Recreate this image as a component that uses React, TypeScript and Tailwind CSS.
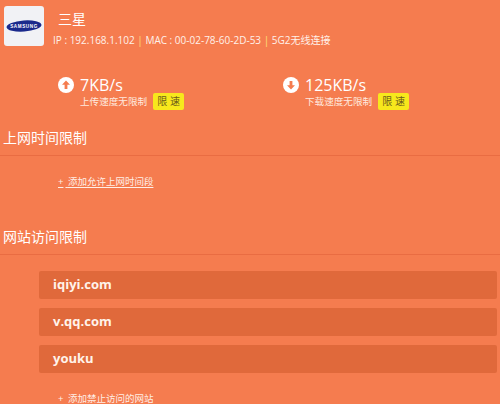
const FONT = "font-['Open_Sans','Noto_Sans_CJK_SC',sans-serif]";

function SamsungLogo() {
  return (
    <div className="w-10 h-10 rounded-[3px] bg-[#f1f2f5] flex items-center justify-center">
      <svg width="36" height="14" viewBox="0 0 36 14">
        <ellipse cx="18" cy="7" rx="17.5" ry="5.6" fill="#1a2a8c" transform="rotate(-4 18 7)" />
        <text x="18" y="8.6" textAnchor="middle" fontSize="4.6" fontWeight="700" letterSpacing="0.6" fill="#fff" fontFamily="Liberation Sans">
          SAMSUNG
        </text>
      </svg>
    </div>
  );
}

function Speed({ dir, value, label }: { dir: "up" | "down"; value: string; label: string }) {
  return (
    <div className="flex gap-[6px]">
      <svg width="16" height="16" viewBox="0 0 16 16">
        <circle cx="8" cy="8" r="8" fill="#fff" />
        {dir === "up" ? (
          <path d="M8 3.5 L12 7.8 H9.4 V12 H6.6 V7.8 H4 Z" fill="#f57c4f" />
        ) : (
          <path d="M8 12.5 L12 8.2 H9.4 V4 H6.6 V8.2 H4 Z" fill="#f57c4f" />
        )}
      </svg>
      <div className="flex flex-col pt-[1px]">
        <div className="text-[16px] leading-[15px] text-white">{value}</div>
        <div className="flex items-center gap-[6px]">
          <span className="text-[9.6px] leading-[14px] text-[#ffe9df]">{label}</span>
          <span className="w-[31px] h-[17px] rounded-[2px] bg-[#f7e81c] text-[#6b5a1a] text-[10px] leading-[17px] text-center">
            限 速
          </span>
        </div>
      </div>
    </div>
  );
}

function SectionTitle({ children }: { children: string }) {
  return (
    <div className="pl-[3px] border-b border-[#e96c42] h-[27px]">
      <div className="text-[14px] leading-[18px] text-white">{children}</div>
    </div>
  );
}

function AddLink({ children }: { children: string }) {
  return (
    <div className="pl-[58px] text-[9.5px] leading-[14px] text-[#ffeee6]">
      <span className="underline underline-offset-2">
        <span className="mr-[2px]">+</span> {children}
      </span>
    </div>
  );
}

export default function App() {
  const sites = ["iqiyi.com", "v.qq.com", "youku"];
  return (
    <div className={`w-[500px] h-[404px] overflow-hidden bg-[#f57c4f] ${FONT}`}>
      {/* Device header */}
      <div className="flex pl-[4px] pt-[6px]">
        <SamsungLogo />
        <div className="ml-[9px]">
          <div className="pl-[5px] text-[14px] leading-[20px] text-white mt-[3px]">三星</div>
          <div className="text-[10px] leading-[14px] text-[#fff1ea] mt-[4px] whitespace-nowrap">
            IP : 192.168.1.102 <span className="text-[#fde07a]">|</span> MAC : 00-02-78-60-2D-53{" "}
            <span className="text-[#fde07a]">|</span> 5G2无线连接
          </div>
        </div>
      </div>

      {/* Speeds */}
      <div className="flex pl-[58px] mt-[30px]">
        <div className="w-[225px]">
          <Speed dir="up" value="7KB/s" label="上传速度无限制" />
        </div>
        <Speed dir="down" value="125KB/s" label="下载速度无限制" />
      </div>

      <div className="mt-[19px]">
        <SectionTitle>上网时间限制</SectionTitle>
      </div>
      <div className="mt-[19px]">
        <AddLink>添加允许上网时间段</AddLink>
      </div>

      <div className="mt-[39px]">
        <SectionTitle>网站访问限制</SectionTitle>
      </div>

      <div className="flex flex-col gap-[9px] pl-[39px] pr-[3px] mt-[16px]">
        {sites.map((s) => (
          <div key={s} className="h-[28px] rounded-[2px] bg-[#e0693b] pl-[14px] text-[13px] leading-[27px] font-bold text-[#fff3ea]">
            {s}
          </div>
        ))}
      </div>

      <div className="mt-[19px]">
        <AddLink>添加禁止访问的网站</AddLink>
      </div>
    </div>
  );
}
